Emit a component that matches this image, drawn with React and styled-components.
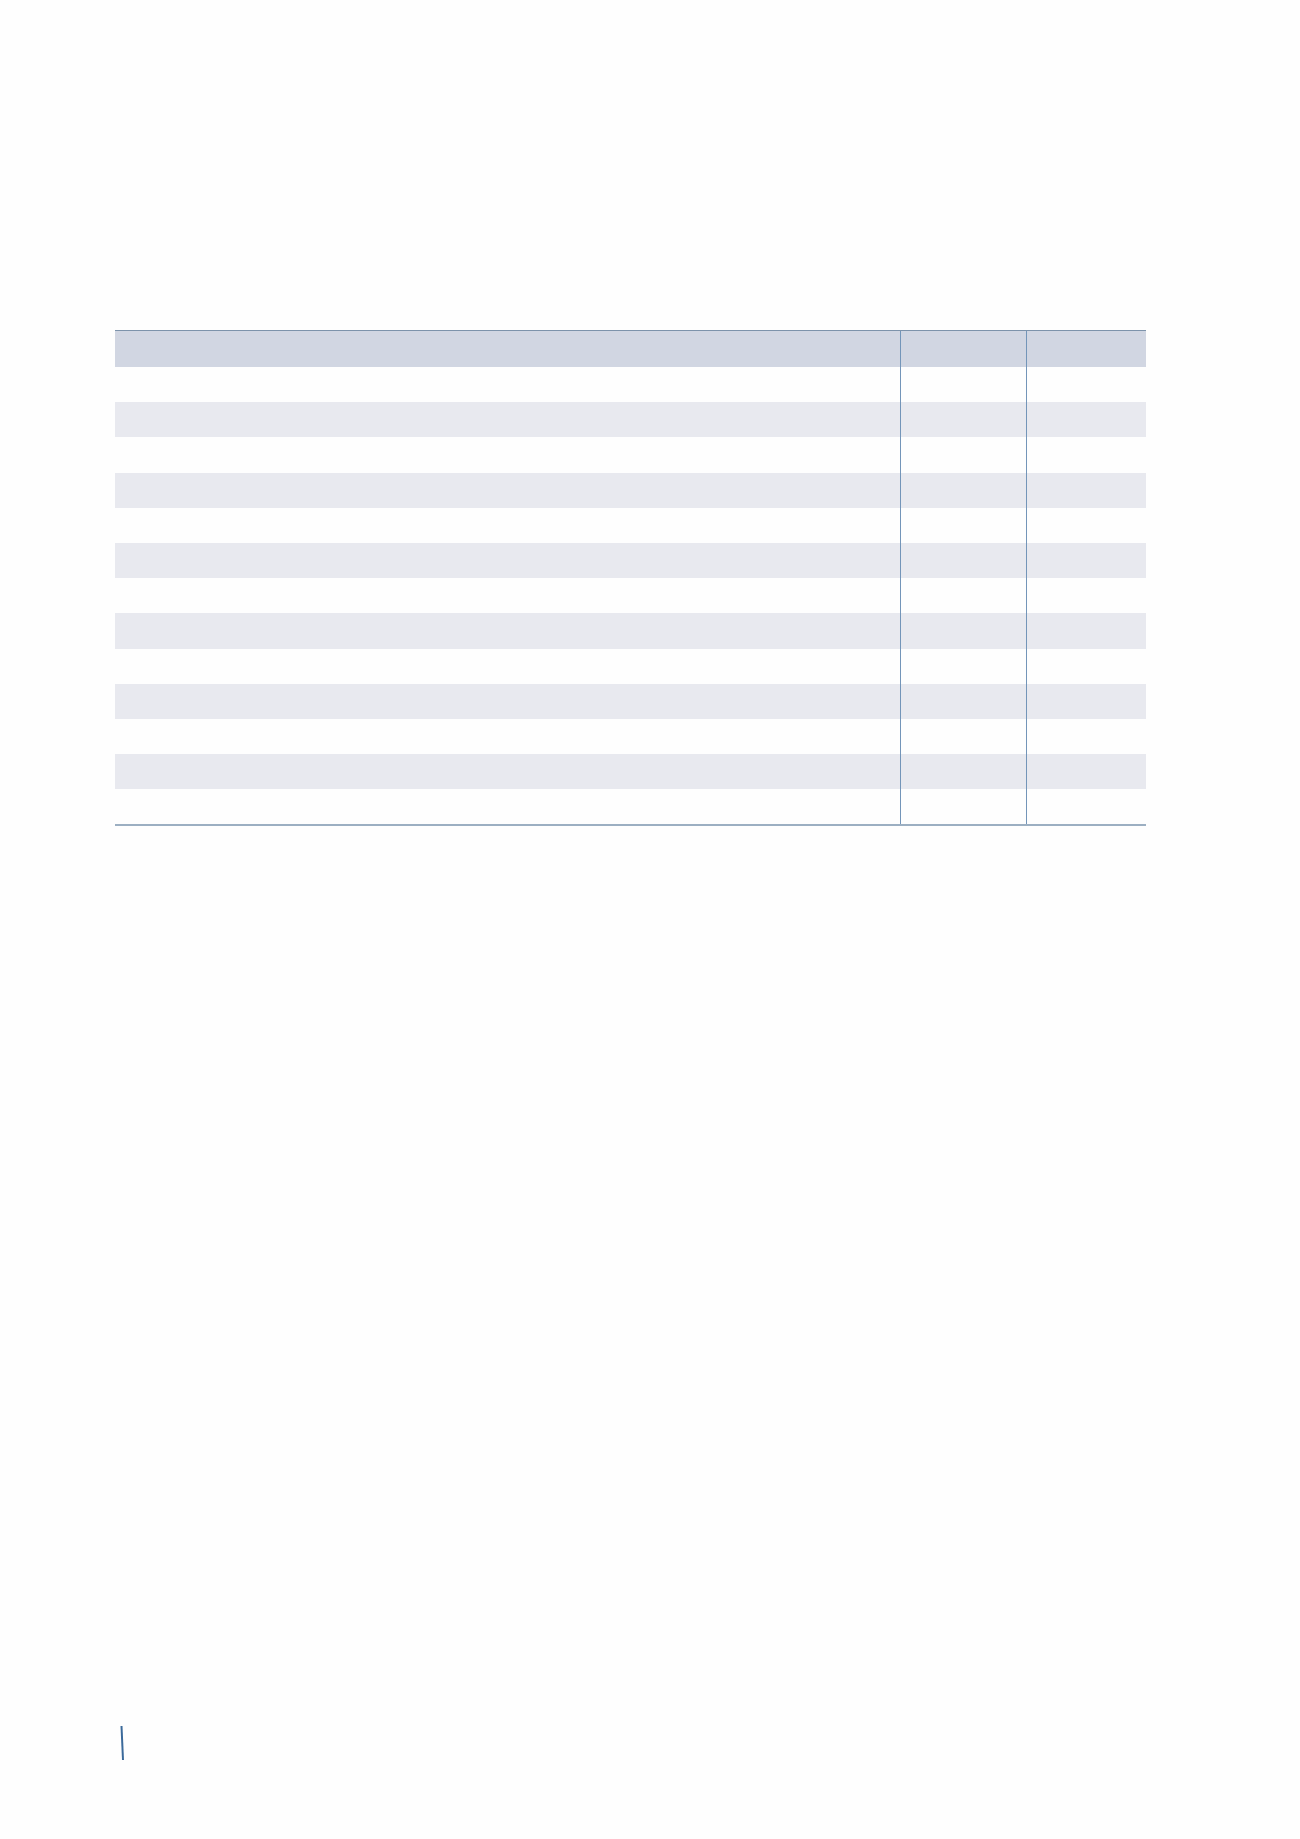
import styled, { createGlobalStyle } from "styled-components";

const Global = createGlobalStyle`
  html, body {
    margin: 0;
    padding: 0;
    background: #fefefe;
    font-family: "Liberation Sans", Arial, sans-serif;
  }
`;

const Page = styled.div`
  width: 1300px;
  min-height: 1839px;
  box-sizing: border-box;
  padding: 330px 0 0 115px;
  display: flex;
  flex-direction: column;
`;

const Table = styled.div`
  width: 1031px;
  display: flex;
  flex-direction: column;
  border-top: 1px solid #7d93ab;
  border-bottom: 2px solid #9cafc2;
`;

const Row = styled.div`
  display: grid;
  grid-template-columns: 785px 126px 120px;
  height: ${(p) => (p.$head ? "36px" : "35.2px")};
  background: ${(p) =>
    p.$head ? "#d1d6e2" : p.$shade ? "#e8e9ef" : "transparent"};
`;

const Cell = styled.div`
  border-left: ${(p) => (p.$first ? "none" : "1px solid #7395b9")};
  font-size: 13px;
  color: #333;
`;

const Mark = styled.svg`
  display: block;
  margin: 900px 0 0 5px;
`;

const rows = Array.from({ length: 13 }, (_, i) => i % 2 === 1);

export default function App() {
  return (
    <>
      <Global />
      <Page>
        <Table>
          <Row $head>
            <Cell $first />
            <Cell />
            <Cell />
          </Row>
          {rows.map((shade, i) => (
            <Row key={i} $shade={shade}>
              <Cell $first />
              <Cell />
              <Cell />
            </Row>
          ))}
        </Table>
        <Mark width="6" height="36" viewBox="0 0 6 36">
          <line x1="1.5" y1="0" x2="3" y2="34" stroke="#3b6a9b" strokeWidth="2" />
        </Mark>
      </Page>
    </>
  );
}
